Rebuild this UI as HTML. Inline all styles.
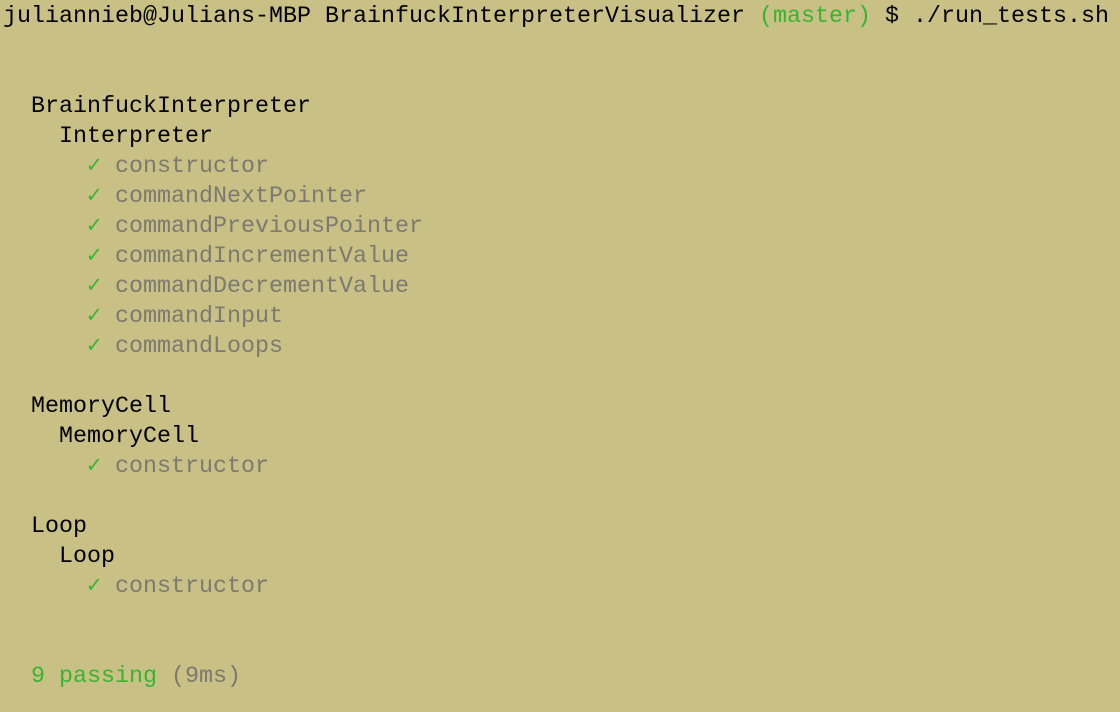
<!DOCTYPE html>
<html><head><style>
html,body{margin:0;padding:0;}
body{width:1120px;height:712px;background:#c8c085;overflow:hidden;font-family:"Liberation Mono",monospace;font-size:23.33px;line-height:30px;color:#000;}
pre{margin:0;padding:2px 0 0 3px;font:inherit;white-space:pre;}
.g{color:#38b52f}.m{color:#7c7a70}
.c{font-weight:bold}
</style></head><body><pre>juliannieb@Julians-MBP BrainfuckInterpreterVisualizer <span class="g">(master)</span> $ ./run_tests.sh


  BrainfuckInterpreter
    Interpreter
      <span class="g c">✓</span> <span class="m">constructor</span>
      <span class="g c">✓</span> <span class="m">commandNextPointer</span>
      <span class="g c">✓</span> <span class="m">commandPreviousPointer</span>
      <span class="g c">✓</span> <span class="m">commandIncrementValue</span>
      <span class="g c">✓</span> <span class="m">commandDecrementValue</span>
      <span class="g c">✓</span> <span class="m">commandInput</span>
      <span class="g c">✓</span> <span class="m">commandLoops</span>

  MemoryCell
    MemoryCell
      <span class="g c">✓</span> <span class="m">constructor</span>

  Loop
    Loop
      <span class="g c">✓</span> <span class="m">constructor</span>


  <span class="g">9 passing</span> <span class="m">(9ms)</span>
</pre></body></html>
